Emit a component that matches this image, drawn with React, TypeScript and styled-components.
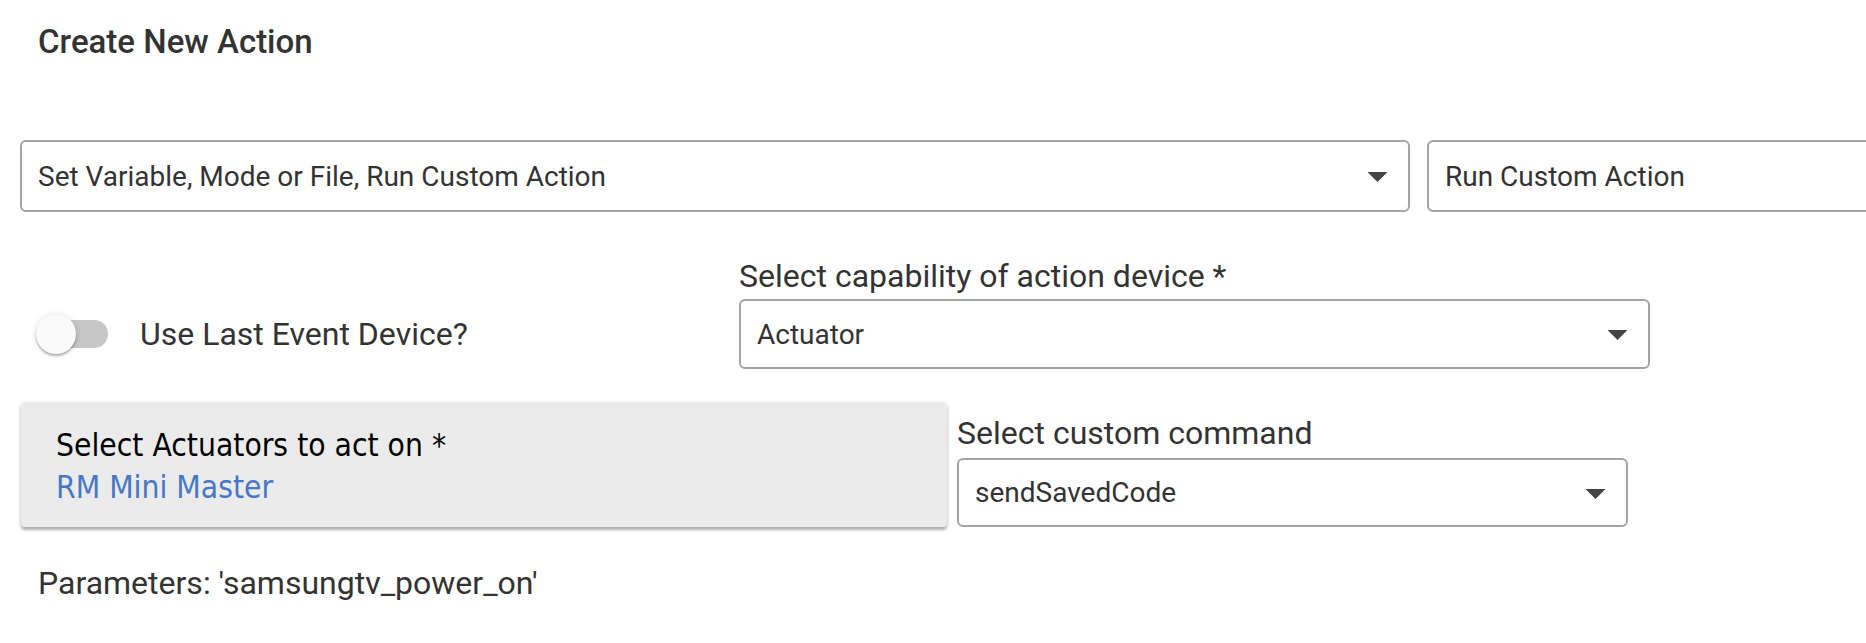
import React from "react";
import styled, { createGlobalStyle } from "styled-components";

const GlobalStyle = createGlobalStyle`
  html, body {
    margin: 0;
    padding: 0;
    background: #ffffff;
    overflow: hidden;
  }
  body {
    font-family: Roboto, "Liberation Sans", sans-serif;
    color: #333333;
  }
`;

const Page = styled.div`
  width: 1866px;
  height: 643px;
  padding: 23px 0 0 20px;
  box-sizing: border-box;
  overflow: hidden;
`;

const Title = styled.h1`
  margin: 0 0 79px 18px;
  font-size: 33px;
  line-height: 38px;
  font-weight: 500;
  color: #333333;
`;

const Row = styled.div<{ $gap: number; $mt?: number }>`
  display: flex;
  align-items: flex-end;
  gap: ${(p) => p.$gap}px;
  margin-top: ${(p) => p.$mt ?? 0}px;
`;

const Field = styled.div<{ $width: number }>`
  display: flex;
  flex-direction: column;
  width: ${(p) => p.$width}px;
  flex-shrink: 0;
`;

const FieldLabel = styled.div<{ $mb: number }>`
  font-size: 32px;
  line-height: 38px;
  color: #333333;
  margin-bottom: ${(p) => p.$mb}px;
  white-space: nowrap;
`;

const SelectBox = styled.div<{ $width?: number; $height: number }>`
  position: relative;
  display: flex;
  align-items: center;
  box-sizing: border-box;
  width: ${(p) => (p.$width ? `${p.$width}px` : "100%")};
  height: ${(p) => p.$height}px;
  flex-shrink: 0;
  border: 2px solid #a4a4a4;
  border-radius: 6px;
  padding: 0 60px 0 16px;
  font-size: 28px;
  color: #333333;
  white-space: nowrap;
`;

const Arrow = styled.svg`
  position: absolute;
  right: 20px;
  top: 50%;
  width: 21px;
  height: 10px;
  margin-top: -4px;
  fill: #444444;
`;

const ToggleArea = styled.div`
  display: flex;
  align-items: center;
  width: 719px;
  height: 70px;
  flex-shrink: 0;
`;

const Switch = styled.div`
  position: relative;
  width: 72px;
  height: 40px;
  margin-left: 16px;
  flex-shrink: 0;
`;

const Track = styled.div`
  position: absolute;
  left: 4px;
  top: 6px;
  width: 68px;
  height: 28px;
  border-radius: 14px;
  background: #c6c6c6;
`;

const Thumb = styled.div`
  position: absolute;
  left: 0;
  top: 0;
  width: 40px;
  height: 40px;
  border-radius: 50%;
  background: #fafafa;
  box-shadow: 0 2px 2px rgba(0, 0, 0, 0.24), 0 1px 6px rgba(0, 0, 0, 0.14);
`;

const SwitchLabel = styled.span`
  margin-left: 32px;
  font-size: 32px;
  color: #333333;
`;

const Card = styled.div`
  width: 926px;
  height: 125px;
  box-sizing: border-box;
  flex-shrink: 0;
  margin-left: 1px;
  padding: 22px 35px 0;
  background: #ebebeb;
  border-radius: 4px;
  box-shadow: 0 3px 3px rgba(0, 0, 0, 0.28), 0 1px 6px rgba(0, 0, 0, 0.08);
  font-family: Tahoma, "DejaVu Sans Condensed", "DejaVu Sans", sans-serif;
  font-size: 31.5px;
  line-height: 42px;
`;

const CardTitle = styled.div`
  color: #000000;
`;

const CardValue = styled.div`
  color: #4677c9;
`;

const Params = styled.div`
  margin: 37px 0 0 18px;
  font-size: 32px;
  line-height: 38px;
  color: #333333;
`;

const DropArrow = () => (
  <Arrow viewBox="0 0 10 5">
    <path d="M0 0 L5 5 L10 0 Z" />
  </Arrow>
);

export default function App() {
  return (
    <>
      <GlobalStyle />
      <Page>
        <Title>Create New Action</Title>

        <Row $gap={17}>
          <SelectBox $width={1390} $height={72}>
            Set Variable, Mode or File, Run Custom Action
            <DropArrow />
          </SelectBox>
          <SelectBox $width={700} $height={72}>
            Run Custom Action
          </SelectBox>
        </Row>

        <Row $gap={0} $mt={45}>
          <ToggleArea>
            <Switch>
              <Track />
              <Thumb />
            </Switch>
            <SwitchLabel>Use Last Event Device?</SwitchLabel>
          </ToggleArea>
          <Field $width={911}>
            <FieldLabel $mb={4}>Select capability of action device *</FieldLabel>
            <SelectBox $height={70}>
              Actuator
              <DropArrow />
            </SelectBox>
          </Field>
        </Row>

        <Row $gap={10} $mt={33}>
          <Card>
            <CardTitle>Select Actuators to act on *</CardTitle>
            <CardValue>RM Mini Master</CardValue>
          </Card>
          <Field $width={671}>
            <FieldLabel $mb={6}>Select custom command</FieldLabel>
            <SelectBox $height={69}>
              sendSavedCode
              <DropArrow />
            </SelectBox>
          </Field>
        </Row>

        <Params>Parameters: 'samsungtv_power_on'</Params>
      </Page>
    </>
  );
}
